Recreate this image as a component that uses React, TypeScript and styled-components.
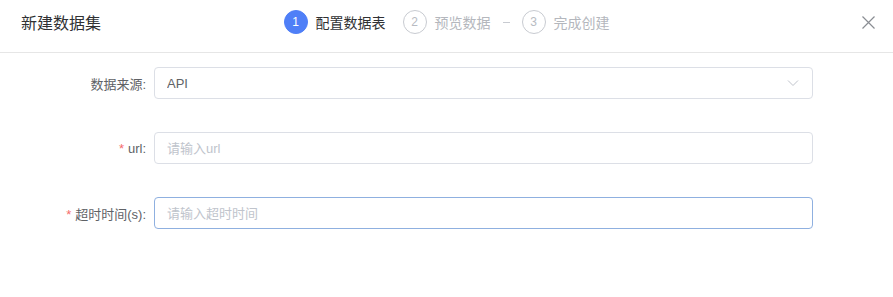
import React, { ReactElement } from 'react'
import styled, { createGlobalStyle } from 'styled-components'

const fontStack = `"Liberation Sans", "Noto Sans CJK SC", sans-serif`

const GlobalStyle = createGlobalStyle`
  html, body {
    margin: 0;
    padding: 0;
    background: #fff;
    font-family: ${fontStack};
  }
  * {
    box-sizing: border-box;
  }
`

const DialogWrapper = styled.div`
  width: 893px;
  height: 297px;
  background: #fff;
`

const Header = styled.div`
  display: grid;
  grid-template-columns: 1fr auto 1fr;
  align-items: center;
  height: 53px;
  padding: 0 17px 8px 21px;
  border-bottom: 1px solid #e6e6e6;
`

const Title = styled.div`
  font-size: 16px;
  color: #303133;
`

const Steps = styled.div`
  display: flex;
  align-items: center;
  padding-right: 4px;
`

const Step = styled.div`
  display: flex;
  align-items: center;
  gap: 8px;
`

const StepIcon = styled.span<{ $active?: boolean }>`
  display: flex;
  align-items: center;
  justify-content: center;
  width: 24px;
  height: 24px;
  border-radius: 50%;
  font-size: 12px;
  border: 1px solid ${(p) => (p.$active ? '#4f7ff7' : '#c8cbd1')};
  background: ${(p) => (p.$active ? '#4f7ff7' : '#fff')};
  color: ${(p) => (p.$active ? '#fff' : '#b8bbc2')};
`

const StepText = styled.span<{ $active?: boolean }>`
  font-size: 14px;
  color: ${(p) => (p.$active ? '#303133' : '#b4b7bd')};
`

const Connector = styled.span<{ $visible?: boolean }>`
  width: ${(p) => (p.$visible ? '7px' : '1px')};
  height: 1px;
  margin: ${(p) => (p.$visible ? '0 12px' : '0 8px')};
  background: ${(p) => (p.$visible ? '#c8cbd1' : 'transparent')};
`

const CloseButton = styled.button`
  justify-self: end;
  display: flex;
  align-items: center;
  justify-content: center;
  width: 16px;
  height: 16px;
  padding: 0;
  border: none;
  background: none;
  color: #8a8d93;
  cursor: pointer;
`

const Form = styled.form`
  display: flex;
  flex-direction: column;
  gap: 33px;
  padding: 14px 80px 0 0;
`

const FormItem = styled.div`
  display: flex;
  align-items: center;
`

const Label = styled.label`
  width: 154px;
  padding-right: 8px;
  text-align: right;
  font-size: 13px;
  color: #606266;
`

const Required = styled.span`
  color: #f56c6c;
  margin-right: 4px;
`

const InputBox = styled.div<{ $focused?: boolean }>`
  flex: 1;
  display: flex;
  align-items: center;
  height: 32px;
  padding: 0 12px;
  border: 1px solid ${(p) => (p.$focused ? '#8fb0e0' : '#dcdfe6')};
  border-radius: 4px;
  background: #fff;
`

const Input = styled.input`
  flex: 1;
  min-width: 0;
  border: none;
  outline: none;
  padding: 0;
  font-family: ${fontStack};
  font-size: 13px;
  color: #606266;
  background: transparent;

  &::placeholder {
    color: #c0c4cc;
  }
`

const steps = [
  { no: 1, text: '配置数据表' },
  { no: 2, text: '预览数据' },
  { no: 3, text: '完成创建' },
]

export default function App(): ReactElement {
  return (
    <DialogWrapper>
      <GlobalStyle />
      <Header>
        <Title>新建数据集</Title>
        <Steps>
          {steps.map((s, i) => (
            <React.Fragment key={s.no}>
              {i > 0 && <Connector $visible={i === 2} />}
              <Step>
                <StepIcon $active={i === 0}>{s.no}</StepIcon>
                <StepText $active={i === 0}>{s.text}</StepText>
              </Step>
            </React.Fragment>
          ))}
        </Steps>
        <CloseButton type="button" aria-label="关闭">
          <svg width="13" height="13" viewBox="0 0 13 13">
            <path d="M0.5 0.5 L12.5 12.5 M12.5 0.5 L0.5 12.5" stroke="currentColor" strokeWidth="1.2" />
          </svg>
        </CloseButton>
      </Header>
      <Form>
        <FormItem>
          <Label>数据来源:</Label>
          <InputBox>
            <Input readOnly defaultValue="API" />
            <svg width="12" height="8" viewBox="0 0 12 8" style={{ marginRight: 1 }}>
              <path d="M1 1.5 L6 6.5 L11 1.5" fill="none" stroke="#c0c4cc" strokeWidth="1" />
            </svg>
          </InputBox>
        </FormItem>
        <FormItem>
          <Label>
            <Required>*</Required>url:
          </Label>
          <InputBox>
            <Input placeholder="请输入url" />
          </InputBox>
        </FormItem>
        <FormItem>
          <Label>
            <Required>*</Required>超时时间(s):
          </Label>
          <InputBox $focused>
            <Input placeholder="请输入超时时间" />
          </InputBox>
        </FormItem>
      </Form>
    </DialogWrapper>
  )
}
